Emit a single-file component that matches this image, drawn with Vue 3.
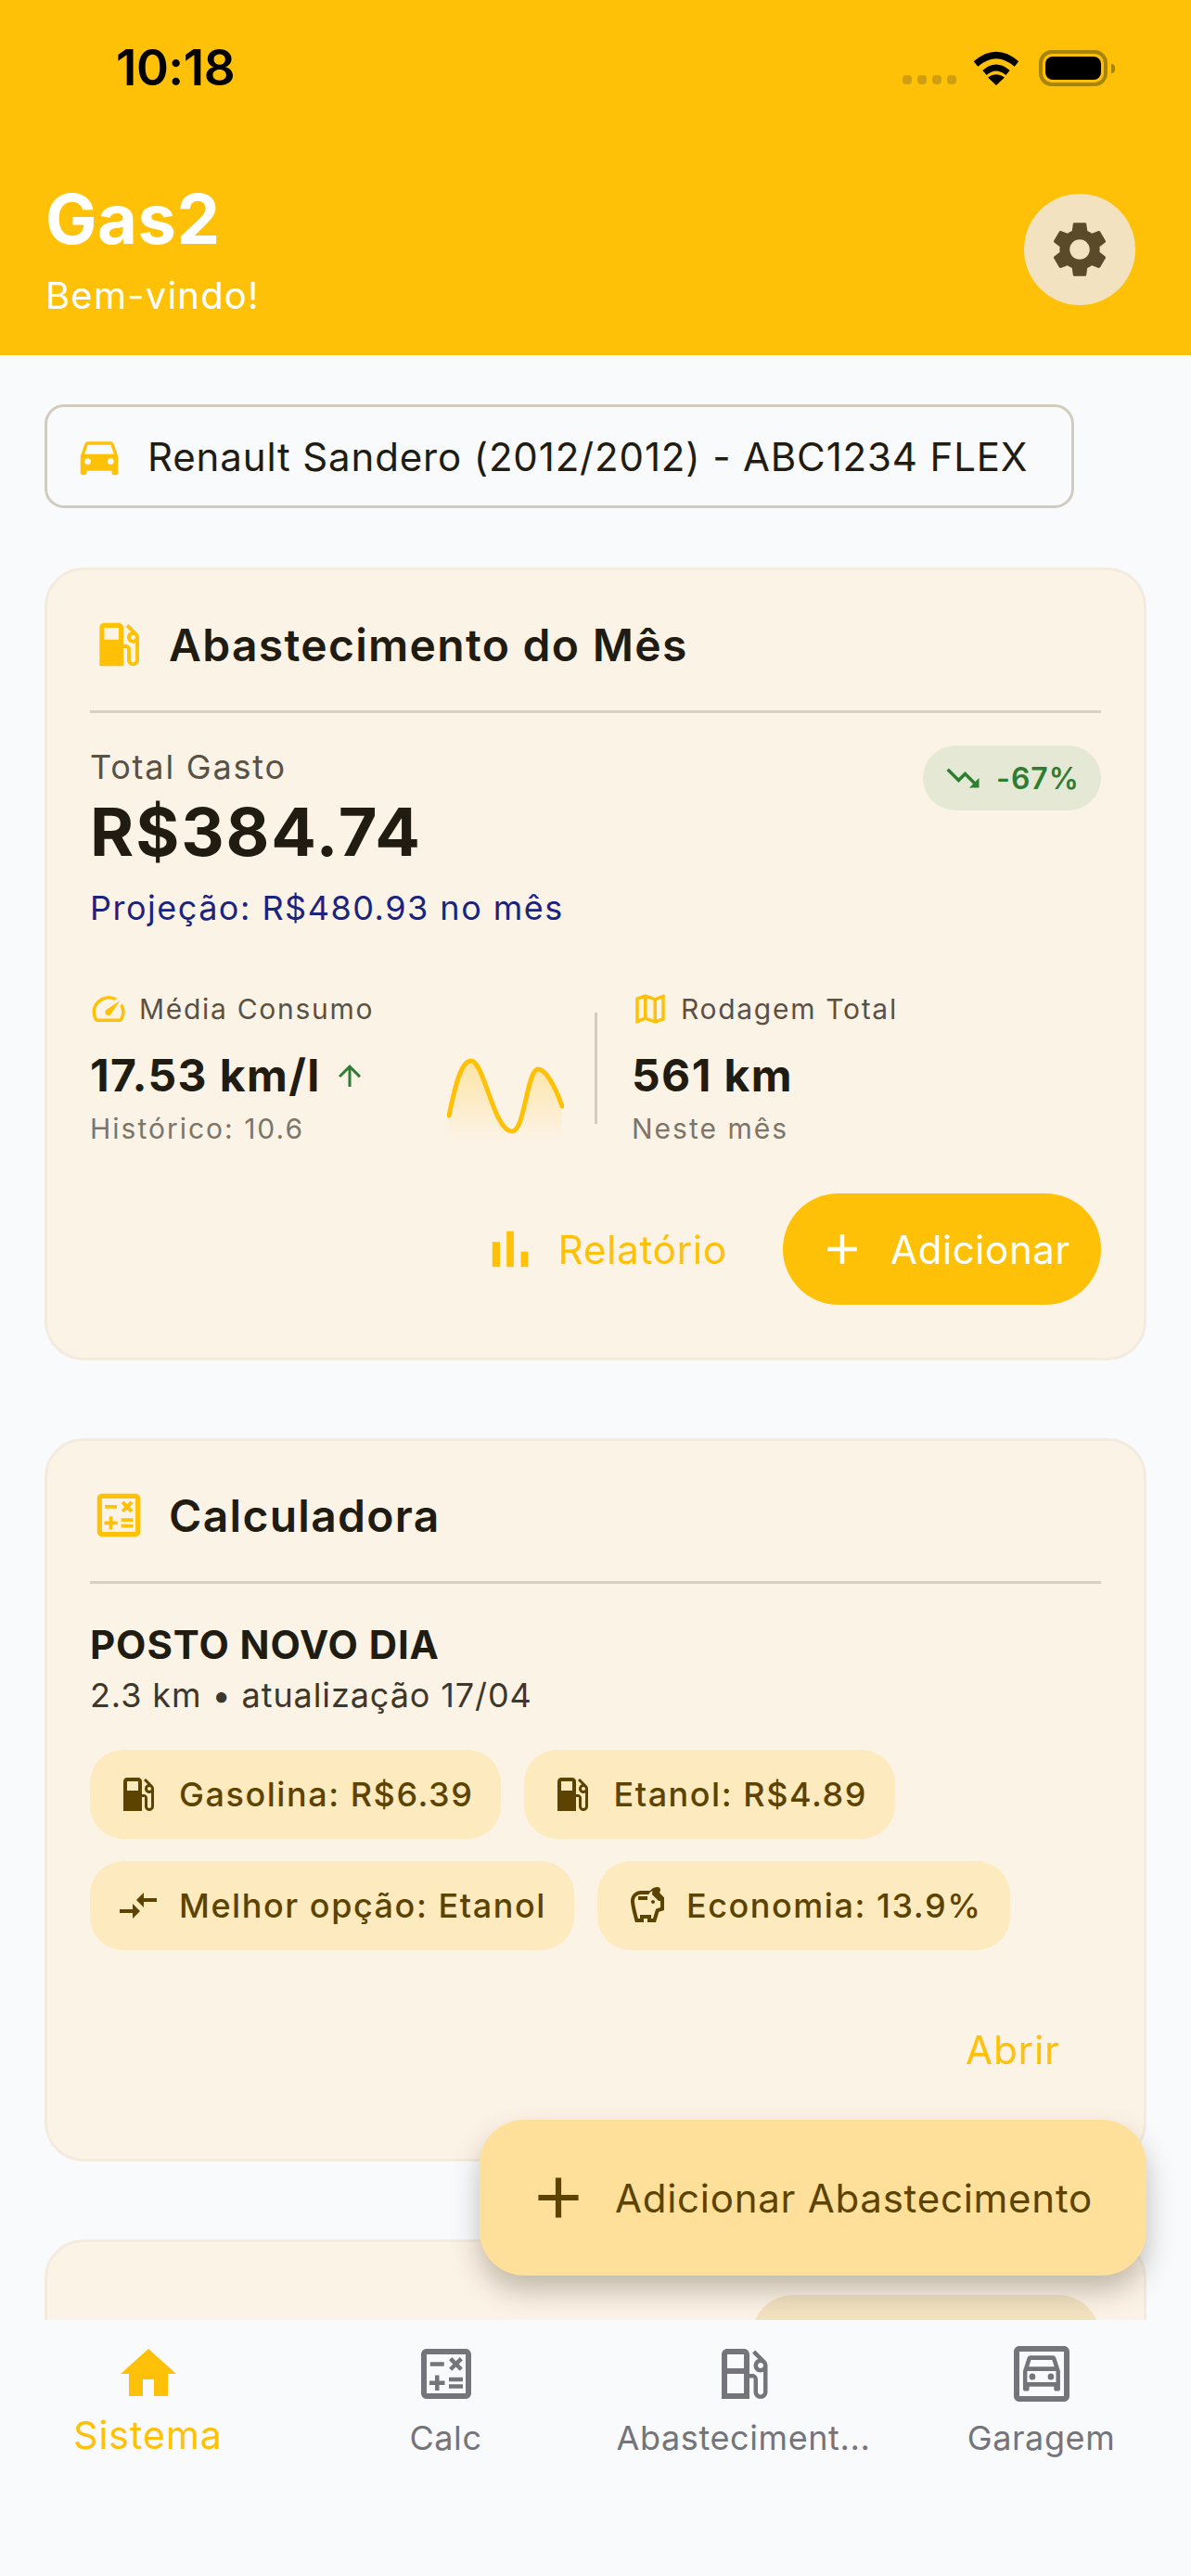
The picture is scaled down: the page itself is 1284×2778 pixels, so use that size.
<template>
  <div class="app">
    <header class="top">
      <div class="status">
        <span class="clock">10:18</span>
        <div class="status-right">
          <span class="dots"><i></i><i></i><i></i><i></i></span>
          <svg class="wifi" viewBox="0 0 50 37">
            <path d="M3 14 Q25 -5 47 14" fill="none" stroke="#000" stroke-width="7" />
            <path d="M12.500 23.500 Q25 12.500 37.500 23.500" fill="none" stroke="#000" stroke-width="6.500" />
            <path d="M25 37 L16 28.500 Q25 22 34 28.500 Z" />
          </svg>
          <span class="battery"><b></b></span>
        </div>
      </div>
      <div class="top-row">
        <div>
          <div class="brand">Gas2</div>
          <div class="hello">Bem-vindo!</div>
        </div>
        <button class="gear">
          <svg viewBox="0 0 24 24"><path :d="icons.settings" /></svg>
        </button>
      </div>
    </header>

    <main class="body">
      <div class="picker">
        <svg class="picker-ic" viewBox="0 0 24 24"><path :d="icons.car" /></svg>
        <span>Renault Sandero (2012/2012) - ABC1234 FLEX</span>
      </div>

      <section class="card card-month">
        <div class="card-head">
          <svg viewBox="0 0 24 24"><path :d="icons.gas" /></svg>
          <h2>Abastecimento do Mês</h2>
        </div>
        <div class="total-row">
          <div>
            <div class="total-label">Total Gasto</div>
            <div class="total-value">R$384.74</div>
            <div class="projection">Projeção: R$480.93 no mês</div>
          </div>
          <span class="trend">
            <svg viewBox="0 0 24 24"><path :d="icons.trendDown" /></svg>
            -67%
          </span>
        </div>

        <div class="stats">
          <div class="stat stat-left">
            <div class="stat-label">
              <svg viewBox="0 0 24 24"><path :d="icons.speed" /></svg>
              Média Consumo
            </div>
            <div class="stat-value">
              17.53 km/l
              <svg class="up" viewBox="0 0 24 24"><path :d="icons.up" /></svg>
            </div>
            <div class="stat-note">Histórico: 10.6</div>
          </div>
          <svg class="spark" viewBox="0 0 126 90">
            <defs>
              <linearGradient id="sparkFill" x1="0" y1="0" x2="0" y2="1">
                <stop offset="0" stop-color="#ffc107" stop-opacity="0.3" />
                <stop offset="1" stop-color="#ffc107" stop-opacity="0" />
              </linearGradient>
            </defs>
            <path :d="sparkLine + ' L124 90 L2 90 Z'" fill="url(#sparkFill)" />
            <path :d="sparkLine" fill="none" stroke="#ffc107" stroke-width="5" stroke-linecap="round" />
          </svg>
          <div class="stat-line"></div>
          <div class="stat">
            <div class="stat-label">
              <svg viewBox="0 0 24 24"><path :d="icons.map" /></svg>
              Rodagem Total
            </div>
            <div class="stat-value">561 km</div>
            <div class="stat-note">Neste mês</div>
          </div>
        </div>

        <div class="actions">
          <button class="btn-text">
            <svg viewBox="0 0 24 24"><path :d="icons.bars" /></svg>
            Relatório
          </button>
          <button class="btn-fill">
            <svg viewBox="0 0 24 24"><path :d="icons.plus" /></svg>
            Adicionar
          </button>
        </div>
      </section>

      <section class="card card-calc">
        <div class="card-head">
          <svg viewBox="0 0 24 24"><path :d="icons.calc" /></svg>
          <h2>Calculadora</h2>
        </div>
        <div class="station">POSTO NOVO DIA</div>
        <div class="station-sub">2.3 km • atualização 17/04</div>
        <div class="chips">
          <span v-for="c in chips" :key="c.text" class="chip">
            <svg viewBox="0 0 24 24"><path :d="c.icon" /></svg>
            {{ c.text }}
          </span>
        </div>
        <div class="open-row">
          <button class="open">Abrir</button>
        </div>
      </section>

      <section class="card card-next">
        <span class="next-pill"></span>
      </section>

      <button class="fab">
        <svg viewBox="0 0 24 24"><path :d="icons.plus" /></svg>
        Adicionar Abastecimento
      </button>
    </main>

    <nav class="tabs">
      <div v-for="t in tabs" :key="t.label" class="tab" :class="{ active: t.active }">
        <svg viewBox="0 0 24 24">
          <path :d="t.icon" />
          <path v-if="t.car" :d="icons.carLine" transform="translate(3.1 1.4) scale(.74 .8)" />
        </svg>
        <span>{{ t.label }}</span>
      </div>
    </nav>
  </div>
</template>

<script setup>
// material icon paths
const icons = {
  settings: 'M19.14 12.94c.04-.3.06-.61.06-.94 0-.32-.02-.64-.07-.94l2.03-1.58c.18-.14.23-.41.12-.61l-1.92-3.32c-.12-.22-.37-.29-.59-.22l-2.39.96c-.5-.38-1.03-.7-1.62-.94l-.36-2.54c-.04-.24-.24-.41-.48-.41h-3.84c-.24 0-.43.17-.47.41l-.36 2.54c-.59.24-1.13.57-1.62.94l-2.39-.96c-.22-.08-.47 0-.59.22L2.74 8.87c-.12.21-.08.47.12.61l2.03 1.58c-.05.3-.09.63-.09.94s.02.64.07.94l-2.03 1.58c-.18.14-.23.41-.12.61l1.92 3.32c.12.22.37.29.59.22l2.39-.96c.5.38 1.03.7 1.62.94l.36 2.54c.05.24.24.41.48.41h3.84c.24 0 .44-.17.47-.41l.36-2.54c.59-.24 1.13-.56 1.62-.94l2.39.96c.22.08.47 0 .59-.22l1.92-3.32c.12-.22.07-.47-.12-.61l-2.01-1.58zM12 15.6c-1.98 0-3.6-1.62-3.6-3.6s1.62-3.6 3.6-3.6 3.6 1.62 3.6 3.6-1.62 3.6-3.6 3.6z',
  car: 'M18.92 6.01C18.72 5.42 18.16 5 17.5 5h-11c-.66 0-1.21.42-1.42 1.01L3 12v8c0 .55.45 1 1 1h1c.55 0 1-.45 1-1v-1h12v1c0 .55.45 1 1 1h1c.55 0 1-.45 1-1v-8l-2.08-5.99zM6.5 16c-.83 0-1.5-.67-1.5-1.5S5.67 13 6.5 13s1.5.67 1.5 1.5S7.33 16 6.5 16zm11 0c-.83 0-1.5-.67-1.5-1.5s.67-1.5 1.5-1.5 1.5.67 1.5 1.5-.67 1.5-1.5 1.5zM5 11l1.5-4.5h11L19 11H5z',
  carLine: 'M18.92 6.010C18.720 5.420 18.160 5 17.500 5h-11c-.66 0-1.210.42-1.420 1.010L3 12v8c0 .55.45 1 1 1h1c.55 0 1-.45 1-1v-1h12v1c0 .55.45 1 1 1h1c.55 0 1-.45 1-1v-8l-2.080-5.990zM6.850 7h10.290l1.040 3H5.810l1.040-3zM19 17H5v-5h14v5zM7.500 16a1.500 1.500 0 1 0 0-3 1.500 1.500 0 0 0 0 3zM16.500 16a1.500 1.500 0 1 0 0-3 1.500 1.500 0 0 0 0 3z',
  gas: 'M19.77 7.23l.01-.01-3.72-3.72L15 4.56l2.11 2.11c-.94.36-1.61 1.26-1.61 2.33 0 1.38 1.12 2.5 2.5 2.5.36 0 .69-.08 1-.21v7.21c0 .55-.45 1-1 1s-1-.45-1-1V14c0-1.1-.9-2-2-2h-1V5c0-1.1-.9-2-2-2H6c-1.1 0-2 .9-2 2v16h10v-7.5h1.5v5c0 1.38 1.12 2.5 2.5 2.5s2.5-1.12 2.5-2.5V9c0-.69-.28-1.32-.73-1.77zM12 10H6V5h6v5zm6 0c-.55 0-1-.45-1-1s.45-1 1-1 1 .45 1 1-.45 1-1 1z',
  gasLine: 'M19.77 7.23l.01-.01-3.72-3.72L15 4.56l2.11 2.11c-.94.36-1.61 1.26-1.61 2.33 0 1.38 1.12 2.5 2.5 2.5.36 0 .69-.08 1-.21v7.21c0 .55-.45 1-1 1s-1-.45-1-1V14c0-1.1-.9-2-2-2h-1V5c0-1.1-.9-2-2-2H6c-1.1 0-2 .9-2 2v16h10v-7.5h1.5v5c0 1.38 1.12 2.5 2.5 2.5s2.5-1.12 2.5-2.5V9c0-.69-.28-1.32-.73-1.77zM12 13.500V19H6v-7h6v1.500zm0-3.500H6V5h6v5zm6 0c-.55 0-1-.45-1-1s.45-1 1-1 1 .45 1 1-.45 1-1 1z',
  calc: 'M19 3H5c-1.100 0-2 .9-2 2v14c0 1.100.9 2 2 2h14c1.100 0 2-.9 2-2V5c0-1.100-.9-2-2-2zm0 16H5V5h14v14zM6.250 7.720h5v1.500h-5zM13 15.750h5v1.500h-5zM13 13.250h5v1.500h-5zM8 18h1.500v-2h2v-1.500h-2v-2H8v2H6V16h2zM14.090 10.950 15.500 9.540l1.410 1.410 1.060-1.060-1.410-1.420 1.410-1.410L16.910 6 15.500 7.410 14.090 6l-1.060 1.060 1.410 1.410-1.410 1.420z',
  home: 'M10 20v-6h4v6h5v-8h3L12 3 2 12h3v8z',
  garage: 'M20 2H4C2.900 2 2 2.900 2 4v16c0 1.100.9 2 2 2h16c1.100 0 2-.9 2-2V4c0-1.100-.9-2-2-2zm0 18H4V4h16v16z',
  speed: 'M20.380 8.570l-1.230 1.850a8 8 0 0 1-.22 7.580H5.070A8 8 0 0 1 15.580 6.850l1.850-1.230A10 10 0 0 0 3.350 19a2 2 0 0 0 1.720 1h13.850a2 2 0 0 0 1.740-1 10 10 0 0 0-.27-10.440zM10.590 15.410a2 2 0 0 0 2.830 0l5.660-8.490-8.490 5.660a2 2 0 0 0 0 2.830z',
  map: 'M20.500 3l-.16.03L15 5.100 9 3 3.360 4.900c-.21.07-.36.25-.36.48V20.500c0 .28.22.5.5.5l.16-.03L9 18.900l6 2.100 5.640-1.900c.21-.07.36-.25.36-.48V3.500c0-.28-.22-.5-.5-.5zM10 5.470l4 1.400v11.660l-4-1.400V5.470zm-5 .99l3-1.010v11.700l-3 1.160V6.460zm14 11.080l-3 1.010V6.860l3-1.160v11.840z',
  bars: 'M5 9.200h3V19H5zM10.600 5h2.800v14h-2.800zm5.600 8H19v6h-2.800z',
  trendDown: 'M16 18l2.290-2.290-4.880-4.880-4 4L2 7.410 3.410 6l6 6 4-4 6.300 6.290L22 12v6z',
  up: 'M4 12l1.410 1.410L11 7.830V20h2V7.830l5.580 5.590L20 12l-8-8-8 8z',
  plus: 'M19 13h-6v6h-2v-6H5v-2h6V5h2v6h6v2z',
  compare: 'M9.010 14H2v2h7.010v3L13 15l-3.990-4v3zm5.980-1v-3H22V8h-7.010V5L11 9l3.990 4z',
  savings: 'M15 10c0-.55.45-1 1-1s1 .45 1 1-.45 1-1 1-1-.45-1-1zM8 9h5V7H8v2zm14-1.500v6.970l-2.820.94L17.500 21H13v-2h-2v2H6.500S4 12.540 4 9.500 6.460 4 9.500 4h5c.91-1.210 2.360-2 4-2 .83 0 1.500.67 1.500 1.500 0 .21-.04.4-.12.58-.14.32-.26.69-.32 1.090l2.270 2.330H22zm-2 2h-1L15.500 6c0-.65.09-1.290.26-1.910-.97.25-1.760.97-2.090 1.910H9.500C7.570 6 6 7.570 6 9.500c0 1.880 1.220 6.650 2.010 9.500H9v-2h6v2h1l1.550-5.150 2.450-.82V9.500z'
}

const sparkLine = 'M2 63 C10 25 16 4 26 4 C40 4 50 80 70 80 C84 80 86 13 98 13 C106 13 116 30 124 53'

const chips = [
  { icon: icons.gas, text: 'Gasolina: R$6.39' },
  { icon: icons.gas, text: 'Etanol: R$4.89' },
  { icon: icons.compare, text: 'Melhor opção: Etanol' },
  { icon: icons.savings, text: 'Economia: 13.9%' }
]

const tabs = [
  { icon: icons.home, label: 'Sistema', active: true },
  { icon: icons.calc, label: 'Calc' },
  { icon: icons.gasLine, label: 'Abasteciment...' },
  { icon: icons.garage, label: 'Garagem', car: true }
]
</script>

<style>
html, body { margin: 0; background: #f9fafc; }
</style>

<style scoped>
.app {
  width: 1284px;
  height: 2778px;
  display: flex;
  flex-direction: column;
  overflow: hidden;
  background: #f9fafc;
  color: #211c12;
  font-family: Inter, "Noto Sans", sans-serif;
}
button {
  border: 0;
  background: none;
  padding: 0;
  font-family: inherit;
  cursor: pointer;
}
svg { fill: currentColor; flex: none; }

/* header */
.top {
  height: 383px;
  flex: none;
  background: #ffc107;
  box-sizing: border-box;
  padding: 0 60px 0 49px;
}
.status {
  height: 146px;
  display: flex;
  align-items: flex-start;
  justify-content: space-between;
  padding: 48px 0 0 76px;
  box-sizing: border-box;
  color: #000;
}
.clock {
  font-size: 53px;
  line-height: 50px;
  font-weight: 600;
  letter-spacing: -0.5px;
}
.status-right {
  display: flex;
  align-items: center;
  height: 50px;
  margin-right: 30px;
}
.dots { display: flex; gap: 6px; margin: 26px 18px 0 0; }
.dots i {
  width: 10px;
  height: 10px;
  border-radius: 4px;
  background: #d0a010;
}
.wifi { width: 50px; height: 37px; margin-right: 21px; }
.battery {
  width: 74px;
  height: 39px;
  box-sizing: border-box;
  border: 4px solid #a88508;
  border-radius: 14px;
  padding: 3px;
  display: block;
  position: relative;
}
.battery b { display: block; height: 100%; background: #000; border-radius: 8px; }
.battery::after {
  content: "";
  position: absolute;
  right: -12px;
  top: 11px;
  width: 4px;
  height: 10px;
  background: #a88508;
  border-radius: 0 5px 5px 0;
}
.top-row {
  display: flex;
  justify-content: space-between;
  align-items: flex-start;
  margin-top: 63px;
}
.brand {
  color: #fff;
  font-size: 74px;
  line-height: 54px;
  font-weight: 700;
  letter-spacing: 0.5px;
}
.hello {
  color: #fff;
  font-size: 40px;
  line-height: 44px;
  margin-top: 34px;
  letter-spacing: 1.2px;
}
.gear {
  width: 120px;
  height: 120px;
  border-radius: 50%;
  background: #f3e2c0;
  color: #5a4a2a;
  display: flex;
  align-items: center;
  justify-content: center;
}
.gear svg { width: 72px; height: 72px; }

/* body */
.body {
  flex: 1;
  min-height: 0;
  position: relative;
  overflow: hidden;
  padding: 53px 48px 0;
}
.picker {
  width: 1110px;
  height: 112px;
  box-sizing: border-box;
  border: 3px solid #d2cbbf;
  border-radius: 21px;
  display: flex;
  align-items: center;
  padding-left: 29px;
  gap: 25px;
  font-size: 42px;
  letter-spacing: 0.85px;
  color: #211c12;
  white-space: nowrap;
}
.picker-ic { width: 54px; height: 54px; color: #ffc107; }

.card {
  box-sizing: border-box;
  background: #fcf3e7;
  border: 3px solid #f3ebde;
  border-radius: 42px;
  padding: 0 46px;
}
.card-month { height: 855px; margin-top: 64px; }
.card-calc { height: 780px; margin-top: 84px; }
.card-next { height: 400px; margin-top: 84px; position: relative; }
.next-pill {
  position: absolute;
  left: 759px;
  top: 57px;
  width: 376px;
  height: 90px;
  border-radius: 45px;
  background: #f3e2c0;
}

.card-head {
  height: 154px;
  box-sizing: border-box;
  display: flex;
  align-items: center;
  gap: 23px;
  border-bottom: 3px solid #d8d0c3;
  padding-top: 9px;
  color: #ffc107;
}
.card-head svg { width: 62px; height: 62px; }
.card-head h2 {
  margin: 0;
  font-size: 48px;
  font-weight: 600;
  color: #211c12;
  letter-spacing: 1.3px;
}

.total-row {
  display: flex;
  justify-content: space-between;
  align-items: flex-start;
  padding-top: 36px;
}
.total-label {
  font-size: 36px;
  line-height: 44px;
  color: #5a5145;
  letter-spacing: 1.8px;
}
.total-value {
  font-size: 72px;
  line-height: 76px;
  font-weight: 700;
  margin-top: 10px;
  letter-spacing: 1.9px;
}
.projection {
  font-size: 36px;
  line-height: 44px;
  margin-top: 22px;
  color: #1a237e;
  letter-spacing: 1.5px;
}
.trend {
  width: 192px;
  height: 70px;
  margin-top: -1px;
  box-sizing: border-box;
  padding-left: 22px;
  border-radius: 35px;
  background: #e5e8d4;
  color: #2e7d32;
  display: flex;
  align-items: center;
  gap: 15px;
  font-size: 32px;
  font-weight: 600;
  letter-spacing: 1px;
}
.trend svg { width: 42px; height: 42px; }

.stats {
  display: flex;
  height: 160px;
  margin-top: 69px;
  position: relative;
}
.stat { display: flex; flex-direction: column; }
.stat-left { width: 385px; }
.stat-label {
  display: flex;
  align-items: center;
  gap: 12px;
  height: 36px;
  font-size: 30px;
  color: #5a5145;
  letter-spacing: 1.7px;
  white-space: nowrap;
}
.stat-label svg { width: 42px; height: 42px; color: #ffc107; margin-left: -1px; }
.stat-value {
  display: flex;
  align-items: center;
  gap: 13px;
  font-size: 48px;
  line-height: 56px;
  font-weight: 700;
  margin-top: 26px;
  letter-spacing: 1.4px;
  white-space: nowrap;
}
.up { width: 36px; height: 36px; color: #2e7d32; }
.stat-note {
  font-size: 30px;
  line-height: 36px;
  margin-top: 11px;
  color: #7d7568;
  letter-spacing: 2px;
}
.spark { width: 126px; height: 90px; margin-top: 70px; }
.stat-line {
  width: 3px;
  height: 120px;
  background: #d2cbbf;
  margin: 22px 37px 0 33px;
}

.actions {
  display: flex;
  justify-content: flex-end;
  align-items: center;
  margin-top: 57px;
  gap: 60px;
}
.btn-text {
  display: flex;
  align-items: center;
  gap: 19px;
  font-size: 42px;
  color: #ffc107;
  letter-spacing: 0.8px;
}
.btn-text svg { width: 66px; height: 66px; }
.btn-fill {
  width: 343px;
  height: 120px;
  border-radius: 60px;
  background: #ffc107;
  color: #fff;
  font-size: 42px;
  letter-spacing: 0.6px;
  display: flex;
  align-items: center;
  justify-content: center;
  gap: 25px;
}
.btn-fill svg { width: 54px; height: 54px; margin-left: 4px; }

.station {
  font-size: 42px;
  line-height: 46px;
  font-weight: 700;
  margin-top: 43px;
  letter-spacing: 0.9px;
}
.station-sub {
  font-size: 36px;
  line-height: 44px;
  margin-top: 9px;
  color: #3e372b;
  letter-spacing: 0.9px;
}
.chips {
  display: flex;
  flex-wrap: wrap;
  gap: 24px 25px;
  margin-top: 37px;
}
.chip {
  height: 96px;
  box-sizing: border-box;
  border-radius: 36px;
  background: #fdeabf;
  color: #5c4400;
  display: flex;
  align-items: center;
  padding: 0 30px 0 28px;
  gap: 20px;
  font-size: 36px;
  font-weight: 500;
  letter-spacing: 1.55px;
  white-space: nowrap;
}
.chip svg { width: 48px; height: 48px; }
.open-row { display: flex; justify-content: flex-end; margin-top: 82px; padding-right: 44px; }
.open { font-size: 42px; color: #ffc107; letter-spacing: 0.9px; }

.fab {
  position: absolute;
  right: 48px;
  top: 1903px;
  width: 719px;
  height: 168px;
  border-radius: 48px;
  background: #ffe09a;
  color: #5c4400;
  font-size: 42px;
  letter-spacing: 0.75px;
  display: flex;
  align-items: center;
  padding-left: 48px;
  gap: 24px;
  box-sizing: border-box;
  box-shadow: 0 16px 30px rgba(60, 50, 30, 0.3);
  white-space: nowrap;
}
.fab svg { width: 74px; height: 74px; flex: none; }

/* bottom nav */
.tabs {
  height: 276px;
  flex: none;
  position: relative;
  background: #f9fafc;
  display: grid;
  grid-template-columns: repeat(4, 321px);
  padding-top: 22px;
  box-sizing: border-box;
}
.tab {
  display: flex;
  flex-direction: column;
  align-items: center;
  color: #74747a;
  font-size: 36px;
  letter-spacing: 0.6px;
  min-width: 0;
  padding-right: 2px;
}
.tab svg { width: 72px; height: 72px; }
.tab span {
  margin-top: 11px;
  line-height: 44px;
  white-space: nowrap;
}
.tab.active { color: #ffc107; font-size: 41px; letter-spacing: 1px; }
.tab.active span { margin-top: 8px; }
</style>
